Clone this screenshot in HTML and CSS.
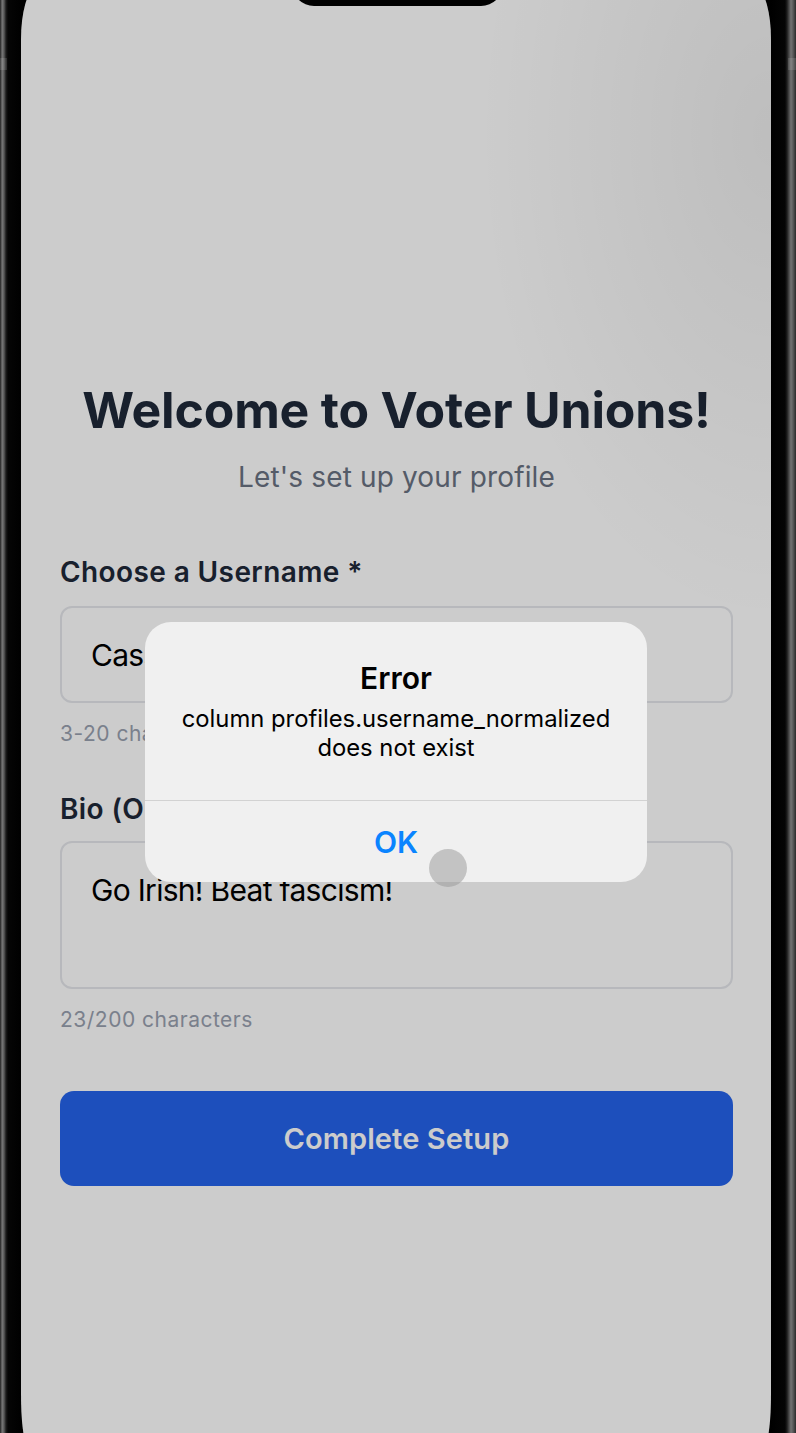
FILE: index.html
```html
<!DOCTYPE html>
<html lang="en">
<head>
<meta charset="utf-8">
<title>Welcome to Voter Unions</title>
<link rel="stylesheet" href="styles.css">
</head>
<body>
<div class="device">
  <div class="bezel bezel-left"></div>
  <div class="screen">
    <main class="app">
      <h1 class="title">Welcome to Voter Unions!</h1>
      <p class="subtitle">Let's set up your profile</p>

      <label class="label label-first">Choose a Username *</label>
      <div class="field field-input"><span class="value">Cassidy</span></div>
      <p class="hint">3-20 characters, letters, numbers, and underscores only</p>

      <label class="label label-bio">Bio (Optional)</label>
      <div class="field field-area"><span class="value">Go Irish! Beat fascism!</span></div>
      <p class="hint">23/200 characters</p>

      <button class="submit">Complete Setup</button>
    </main>
    <div class="scrim"></div>
    <div class="alert">
      <div class="alert-body">
        <h2 class="alert-title">Error</h2>
        <p class="alert-msg"><span class="msg-line">column profiles.username_normalized</span><span class="msg-line">does not exist</span></p>
      </div>
      <div class="alert-action">OK</div>
    </div>
    <div class="touch"></div>
  </div>
  <div class="bezel bezel-right"></div>
  <div class="notch"></div>
</div>
</body>
</html>
```

FILE: styles.css
```css
* { box-sizing: border-box; }
html, body { margin: 0; padding: 0; background: #000; }

.device {
  position: relative;
  display: flex;
  width: 796px;
  height: 1433px;
  overflow: hidden;
  background: #000;
  font-family: "Inter", "Noto Sans", sans-serif;
}

.bezel { flex: 0 0 auto; height: 100%; }
.bezel-left {
  width: 21px;
  background:
    linear-gradient(to bottom, transparent 58px, rgba(255,255,255,0.12) 58px, rgba(255,255,255,0.12) 70px, transparent 70px) 0 0 / 7px 100% no-repeat,
    linear-gradient(to right, #2b2b2b 0px, #3c3c3c 1px, #7a7a7a 2px, #5a5a5a 4px, #1c1c1c 6px, #050505 8px, #000 21px);
}
.bezel-right {
  width: 25px;
  background:
    linear-gradient(to bottom, transparent 58px, rgba(255,255,255,0.12) 58px, rgba(255,255,255,0.12) 70px, transparent 70px) 17px 0 / 8px 100% no-repeat,
    linear-gradient(to right, #000 0px, #050505 14px, #1e1e1e 16px, #4a4a4a 18px, #727272 20px, #5a5a5a 22px, #3a3a3a 24px, #2a2a2a 25px);
}

.screen {
  position: relative;
  flex: 0 0 750px;
  height: 1453px;
  margin-top: -10px;
  overflow: hidden;
  background: #fff;
  border-radius: 14px 14px 6px 6px / 50px 50px 50px 50px;
}

.notch {
  position: absolute;
  left: 292px;
  top: -30px;
  width: 211px;
  height: 36px;
  background: #000;
  border-radius: 0 0 22px 22px;
}

.app {
  display: flex;
  flex-direction: column;
  padding: 390px 38px 0 39px;
}

.title {
  margin: 0;
  font-size: 50px;
  line-height: 60px;
  font-weight: 700;
  letter-spacing: -0.2px;
  color: #1e2939;
  text-align: center;
}
.subtitle {
  margin: 19px 0 0;
  font-size: 28px;
  line-height: 36px;
  letter-spacing: 0.15px;
  color: #6a7282;
  text-align: center;
}

.label {
  display: block;
  margin-top: 41px;
  font-size: 28px;
  line-height: 36px;
  font-weight: 600;
  letter-spacing: 0.4px;
  color: #1e2939;
}
.label-first { margin-top: 59px; }
.label-bio { margin-top: 43px; }

.field {
  margin-top: 16px;
  border: 2px solid #e5e7eb;
  border-radius: 12px;
  background: #fff;
  color: #000;
  font-size: 30px;
  line-height: 36px;
  letter-spacing: -0.7px;
}
.label-bio + .field { margin-top: 14px; }
.field-input {
  display: flex;
  align-items: center;
  height: 97px;
  padding: 0 29px;
}
.field-area {
  height: 148px;
  padding: 29px 29px 0;
}

.hint {
  margin: 17px 0 0;
  font-size: 21px;
  line-height: 28px;
  letter-spacing: 0.5px;
  color: #99a1af;
  white-space: nowrap;
}

.submit {
  margin-top: 57px;
  height: 95px;
  border: 0;
  border-radius: 14px;
  background: #2563eb;
  color: #fff;
  font-family: inherit;
  font-size: 29px;
  font-weight: 600;
  letter-spacing: 0.1px;
}

.scrim {
  position: absolute;
  inset: 0;
  background:
    radial-gradient(ellipse 420px 700px at 100% 10%, rgba(0,0,0,0.07), rgba(0,0,0,0) 70%),
    rgba(0,0,0,0.2);
}

.alert {
  position: absolute;
  left: 124px;
  top: 632px;
  width: 502px;
  border-radius: 26px;
  background: #f0f0f0;
  text-align: center;
  color: #000;
}
.alert-body {
  padding: 38px 16px 38px;
  border-bottom: 1px solid #d2d2d2;
}
.alert-title {
  margin: 0;
  font-size: 30px;
  line-height: 36px;
  font-weight: 600;
}
.alert-msg {
  display: flex;
  flex-direction: column;
  margin: 8px 0 0;
  font-size: 23.8px;
}
.msg-line {
  display: block;
  height: 29px;
  line-height: 29px;
}
.alert-action {
  height: 81px;
  display: flex;
  align-items: center;
  justify-content: center;
  font-size: 30px;
  font-weight: 600;
  color: #0a84ff;
}

.touch {
  position: absolute;
  left: 408px;
  top: 859px;
  width: 38px;
  height: 38px;
  border-radius: 50%;
  background: rgba(150,150,150,0.5);
}
```
